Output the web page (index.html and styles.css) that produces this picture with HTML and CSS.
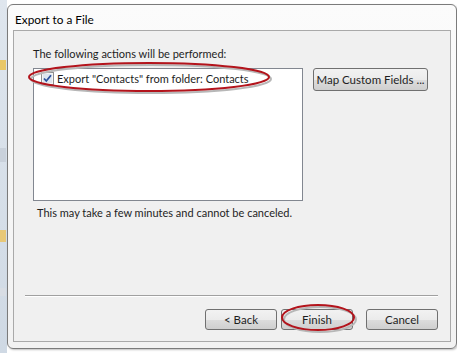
FILE: index.html
```html
<!DOCTYPE html>
<html lang="en">
<head>
    <meta charset="UTF-8">
    <title>Export to a File</title>
    <link rel="stylesheet" href="styles.css">
</head>
<body>
    <div class="screen">
        <!-- bits of the Outlook window behind the dialog -->
        <div class="behind">
            <span class="blob b1"></span>
            <span class="blob b2"></span>
            <span class="blob b3"></span>
            <span class="blob b4"></span>
        </div>

        <div class="dialog">
            <div class="titlebar">Export to a File</div>

            <div class="content">
                <div class="label">The following actions will be performed:</div>

                <div class="row">
                    <div class="listbox">
                        <div class="item">
                            <svg class="check" width="13" height="13" viewBox="0 0 13 13">
                                <rect x="0.5" y="0.5" width="12" height="12" fill="#f4f4f4" stroke="#8e8f8f"/>
                                <rect x="2" y="2" width="9" height="9" fill="#dde6ef"/>
                                <path d="M3 6.5 L5.3 9 L10 3.3" fill="none" stroke="#2a4f9c" stroke-width="1.8"/>
                            </svg>
                            <span>Export "Contacts" from folder: Contacts</span>
                        </div>
                    </div>
                    <button class="btn map">Map Custom Fields ...</button>
                </div>

                <div class="note">This may take a few minutes and cannot be canceled.</div>

                <div class="spacer"></div>
                <div class="separator"></div>

                <div class="buttons">
                    <button class="btn">&lt; Back</button>
                    <button class="btn">Finish</button>
                    <button class="btn cancel">Cancel</button>
                </div>
            </div>
        </div>
        <div class="behind-right"></div>
    </div>

    <!-- red annotation rings drawn over the dialog -->
    <svg class="ring ring-item" width="250" height="36" viewBox="0 0 250 36">
        <ellipse cx="125" cy="19" rx="120" ry="14" fill="none" stroke="#b7b7b7" stroke-width="2"/>
        <ellipse cx="123" cy="17" rx="120" ry="14" fill="none" stroke="#b3141c" stroke-width="2"/>
    </svg>
    <svg class="ring ring-finish" width="80" height="32" viewBox="0 0 80 32">
        <ellipse cx="40" cy="17.5" rx="36" ry="12.5" fill="none" stroke="#b7b7b7" stroke-width="2"/>
        <ellipse cx="38" cy="15.5" rx="36" ry="12.5" fill="none" stroke="#b3141c" stroke-width="2"/>
    </svg>
</body>
</html>
```

FILE: styles.css
```css
body {
    margin: 0;
    background-color: #ffffff;
    font-family: Lato, "Noto Sans", sans-serif;
    font-size: 11px;
    color: #1e1e1e;
}
.screen {
    display: flex;
    width: 461px;
    height: 353px;
    overflow: hidden;
}
.behind {
    width: 7px;
    flex: none;
    background: linear-gradient(#dfe6ee, #cfd9e4);
    display: flex;
    flex-direction: column;
}
.blob {
    display: block;
    width: 6px;
    background: #e8c25e;
}
.b1 { height: 10px; margin-top: 60px; background: #e9c767; }
.b2 { height: 14px; margin-top: 78px; background: #c9d1db; }
.b3 { height: 12px; margin-top: 68px; background: #e8c877; }
.b4 { height: 8px; margin-top: 46px; background: #d8dde4; }
.behind-right {
    width: 4px;
    flex: none;
    background: #ffffff;
}
.dialog {
    width: 450px;
    height: 345px;
    margin-top: 4px;
    flex: none;
    box-sizing: border-box;
    border: 1px solid #7b7b7b;
    border-radius: 6px;
    background: linear-gradient(#fbfbfb, #f2f2f2);
    display: flex;
    flex-direction: column;
    padding: 0 5px 6px 5px;
    box-shadow: 1px 1px 2px rgba(0, 0, 0, 0.25);
}
.titlebar {
    height: 25px;
    line-height: 29px;
    padding-left: 2px;
    font-size: 11.8px;
    color: #000;
}
.content {
    flex: 1;
    border: 1px solid #a9a9a9;
    background-color: #f0f0f0;
    padding: 15px 12px 11px 19px;
    display: flex;
    flex-direction: column;
}
.label {
    line-height: 16px;
    margin-bottom: 6px;
}
.row {
    display: flex;
    gap: 10px;
    align-items: flex-start;
}
.listbox {
    width: 270px;
    height: 133px;
    box-sizing: border-box;
    border: 1px solid #828790;
    background: #ffffff;
    padding: 1px 7px;
}
.item {
    display: flex;
    align-items: center;
    gap: 3px;
    height: 16px;
}
.check {
    display: block;
    flex: none;
}
.note {
    margin-top: 4px;
    padding-left: 4px;
    line-height: 16px;
}
.spacer {
    flex: 1;
}
.separator {
    margin: 0 0 12px -8px;
    border-top: 1px solid #a0a0a0;
    border-bottom: 1px solid #ffffff;
}
.buttons {
    display: flex;
    justify-content: flex-end;
    gap: 4px;
}
.btn {
    font-family: inherit;
    font-size: 11.5px;
    color: #1e1e1e;
    height: 21px;
    width: 72px;
    padding: 0;
    white-space: nowrap;
    border: 1px solid #707070;
    border-radius: 3px;
    background: linear-gradient(#f2f2f2 0%, #ebebeb 50%, #dddddd 51%, #cfcfcf 100%);
}
.btn.cancel {
    margin-left: 9px;
}
.btn.map {
    width: 115px;
    height: 23px;
}
.ring {
    position: absolute;
}
.ring-item {
    left: 26px;
    top: 60px;
}
.ring-finish {
    left: 280px;
    top: 302px;
}
```
